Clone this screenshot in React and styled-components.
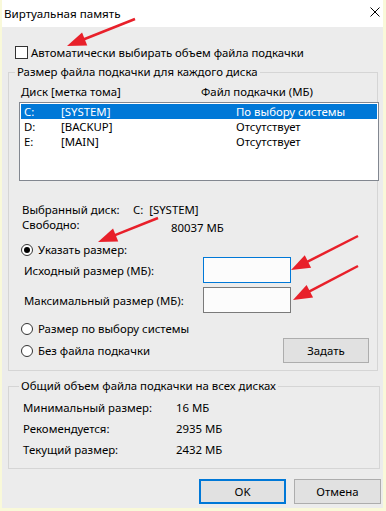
import React from "react";
import styled, { createGlobalStyle } from "styled-components";

const GlobalStyle = createGlobalStyle`
  html, body {
    margin: 0;
    padding: 0;
    background: #f9f9d9;
  }
  body {
    font-family: "Noto Sans", "Open Sans", sans-serif;
    font-size: 11.4px;
    color: #000;
  }
`;

const drives = [
  { letter: "C:", label: "[SYSTEM]", file: "По выбору системы", selected: true },
  { letter: "D:", label: "[BACKUP]", file: "Отсутствует" },
  { letter: "E:", label: "[MAIN]", file: "Отсутствует" },
];

const totals = [
  { name: "Минимальный размер:", value: "16 МБ" },
  { name: "Рекомендуется:", value: "2935 МБ" },
  { name: "Текущий размер:", value: "2432 МБ" },
];

const arrows = [
  { x1: 135, y1: 19, x2: 67, y2: 46 },
  { x1: 158, y1: 218, x2: 98, y2: 242 },
  { x1: 358, y1: 236, x2: 291, y2: 270 },
  { x1: 358, y1: 266, x2: 293, y2: 300 },
];

function Arrow({ x1, y1, x2, y2 }) {
  const len = Math.hypot(x2 - x1, y2 - y1);
  const ux = (x2 - x1) / len;
  const uy = (y2 - y1) / len;
  const bx = x2 - ux * 19;
  const by = y2 - uy * 19;
  const nx = -uy * 7;
  const ny = ux * 7;
  const pts = `${x2},${y2} ${bx + nx},${by + ny} ${bx - nx},${by - ny}`;
  return (
    <g>
      <line x1={x1} y1={y1} x2={bx + ux * 2} y2={by + uy * 2} stroke="#e8202a" strokeWidth="2.5" />
      <polygon points={pts} fill="#e8202a" />
    </g>
  );
}

function App() {
  return (
    <Page>
      <GlobalStyle />
      <Window>
        <TitleBar>
          <Title>Виртуальная память</Title>
          <Close viewBox="0 0 10 10">
            <path d="M0.5 0.5 L9.5 9.5 M9.5 0.5 L0.5 9.5" stroke="#000" strokeWidth="1" />
          </Close>
        </TitleBar>
        <Body>
          <CheckRow>
            <CheckBox />
            Автоматически выбирать объем файла подкачки
          </CheckRow>

          <Group $width={370}>
            <Legend>Размер файла подкачки для каждого диска</Legend>
            <Headers>
              <span>Диск [метка тома]</span>
              <span>Файл подкачки (МБ)</span>
            </Headers>
            <ListBox>
              {drives.map((d) => (
                <DriveRow key={d.letter} $selected={d.selected}>
                  <span>{d.letter}</span>
                  <span>{d.label}</span>
                  <span>{d.file}</span>
                </DriveRow>
              ))}
            </ListBox>

            <InfoBlock>
              <InfoRow>
                <span>Выбранный диск:</span>
                <Value>C:&nbsp;&nbsp;[SYSTEM]</Value>
              </InfoRow>
              <InfoRow>
                <span>Свободно:</span>
                <Value $shift={38} $drop={3}>80037 МБ</Value>
              </InfoRow>
            </InfoBlock>

            <RadioRow $top={11}>
              <Radio $checked />
              Указать размер:
            </RadioRow>
            <SizeRow>
              <span>Исходный размер (МБ):</span>
              <SizeInput $focused />
            </SizeRow>
            <SizeRow>
              <span>Максимальный размер (МБ):</span>
              <SizeInput />
            </SizeRow>

            <ChoiceSection>
              <Choices>
                <RadioRow>
                  <Radio />
                  Размер по выбору системы
                </RadioRow>
                <RadioRow>
                  <Radio />
                  Без файла подкачки
                </RadioRow>
              </Choices>
              <SetButton>Задать</SetButton>
            </ChoiceSection>
          </Group>

          <TotalsGroup $width={372}>
            <Legend>Общий объем файла подкачки на всех дисках</Legend>
            {totals.map((t) => (
              <TotalRow key={t.name}>
                <span>{t.name}</span>
                <span>{t.value}</span>
              </TotalRow>
            ))}
          </TotalsGroup>

          <Footer>
            <DialogButton $primary>OK</DialogButton>
            <DialogButton>Отмена</DialogButton>
          </Footer>
        </Body>
      </Window>
      <Overlay width="386" height="511" viewBox="0 0 386 511">
        {arrows.map((a, i) => (
          <Arrow key={i} {...a} />
        ))}
      </Overlay>
    </Page>
  );
}

const Page = styled.div`
  position: relative;
  width: 386px;
  height: 511px;
  overflow: hidden;
`;

const Window = styled.div`
  margin-left: 2px;
  width: 381px;
  height: 508px;
  display: flex;
  flex-direction: column;
`;

const TitleBar = styled.div`
  height: 27px;
  flex-shrink: 0;
  background: #ffffff;
  display: flex;
  align-items: center;
  justify-content: space-between;
  padding: 0 3px 0 2px;
  box-sizing: border-box;
`;

const Title = styled.div`
  font-size: 11.6px;
  line-height: 15px;
  margin-top: -1px;
`;

const Close = styled.svg`
  width: 10px;
  height: 10px;
  margin-top: -3px;
`;

const Body = styled.div`
  flex: 1;
  background: #ececec;
  padding: 0 0 0 6px;
  display: flex;
  flex-direction: column;
`;

const CheckRow = styled.label`
  display: flex;
  align-items: center;
  height: 15px;
  line-height: 15px;
  margin: 18px 0 0 7px;
  gap: 3px;
  white-space: nowrap;
`;

const CheckBox = styled.span`
  width: 13px;
  height: 13px;
  box-sizing: border-box;
  border: 1px solid #333;
  background: #fff;
  flex-shrink: 0;
`;

const Group = styled.fieldset`
  margin: 4px 0 0 0;
  width: ${(p) => p.$width}px;
  box-sizing: border-box;
  border: 1px solid #d5d5d5;
  padding: 4px 0 7px 10px;
  min-width: 0;
`;

const Legend = styled.legend`
  padding: 0 2px;
  margin-left: -4px;
  line-height: 16px;
  white-space: nowrap;
`;

const Headers = styled.div`
  display: grid;
  grid-template-columns: 180px 1fr;
  padding-left: 2px;
  height: 15px;
  line-height: 15px;
`;

const ListBox = styled.div`
  margin-top: 3px;
  width: 360px;
  height: 79px;
  box-sizing: border-box;
  border: 1px solid #828790;
  background: #fff;
  padding: 1px;
`;

const DriveRow = styled.div`
  display: grid;
  grid-template-columns: 37px 175px 1fr;
  height: 15px;
  line-height: 15px;
  padding-left: 3px;
  white-space: nowrap;
  background: ${(p) => (p.$selected ? "#0078d7" : "transparent")};
  color: ${(p) => (p.$selected ? "#fff" : "#000")};
`;

const InfoBlock = styled.div`
  margin-top: 21px;
  padding-left: 3px;
`;

const InfoRow = styled.div`
  display: grid;
  grid-template-columns: 111px 1fr;
  height: 15px;
  line-height: 15px;
`;

const Value = styled.span`
  margin-left: ${(p) => p.$shift || 0}px;
  padding-top: ${(p) => p.$drop || 0}px;
`;

const RadioRow = styled.label`
  display: flex;
  align-items: center;
  gap: 5px;
  height: 14px;
  line-height: 14px;
  margin-top: ${(p) => p.$top || 0}px;
  padding-left: 2px;
  white-space: nowrap;
`;

const Radio = styled.span`
  width: 12px;
  height: 12px;
  box-sizing: border-box;
  border: 1px solid #333;
  border-radius: 50%;
  background: #fff;
  flex-shrink: 0;
  display: flex;
  align-items: center;
  justify-content: center;
  &::after {
    content: "";
    width: 6px;
    height: 6px;
    border-radius: 50%;
    background: ${(p) => (p.$checked ? "#000" : "transparent")};
  }
`;

const SizeRow = styled.div`
  display: grid;
  grid-template-columns: 184px 88px;
  align-items: center;
  height: 26px;
  & + & {
    margin-top: 4px;
  }
  & > span {
    padding-left: 5px;
  }
`;

const SizeInput = styled.div`
  width: 88px;
  height: 26px;
  box-sizing: border-box;
  background: #fcfcfc;
  border: 1px solid ${(p) => (p.$focused ? "#0078d7" : "#7a7a7a")};
`;

const ChoiceSection = styled.div`
  display: flex;
  justify-content: space-between;
  align-items: flex-start;
  margin-top: 9px;
  padding-right: 8px;
`;

const Choices = styled.div`
  display: flex;
  flex-direction: column;
  gap: 8px;
`;

const SetButton = styled.div`
  width: 86px;
  height: 25px;
  margin-top: 16px;
  box-sizing: border-box;
  background: #e1e1e1;
  border: 1px solid #adadad;
  display: flex;
  align-items: center;
  justify-content: center;
`;

const TotalsGroup = styled(Group)`
  margin-top: 7px;
  padding: 6px 0 11px 14px;
  display: flex;
  flex-direction: column;
  gap: 6px;
`;

const TotalRow = styled.div`
  display: grid;
  grid-template-columns: 153px 1fr;
  height: 15px;
  line-height: 15px;
`;

const Footer = styled.div`
  display: flex;
  justify-content: flex-end;
  gap: 8px;
  margin-top: 10px;
  padding-right: 2px;
`;

const DialogButton = styled.div`
  width: 87px;
  height: 25px;
  box-sizing: border-box;
  background: #e1e1e1;
  border: ${(p) => (p.$primary ? "2px solid #0078d7" : "1px solid #adadad")};
  display: flex;
  align-items: center;
  justify-content: center;
`;

const Overlay = styled.svg`
  position: absolute;
  top: 0;
  left: 0;
  pointer-events: none;
`;

export default App;
